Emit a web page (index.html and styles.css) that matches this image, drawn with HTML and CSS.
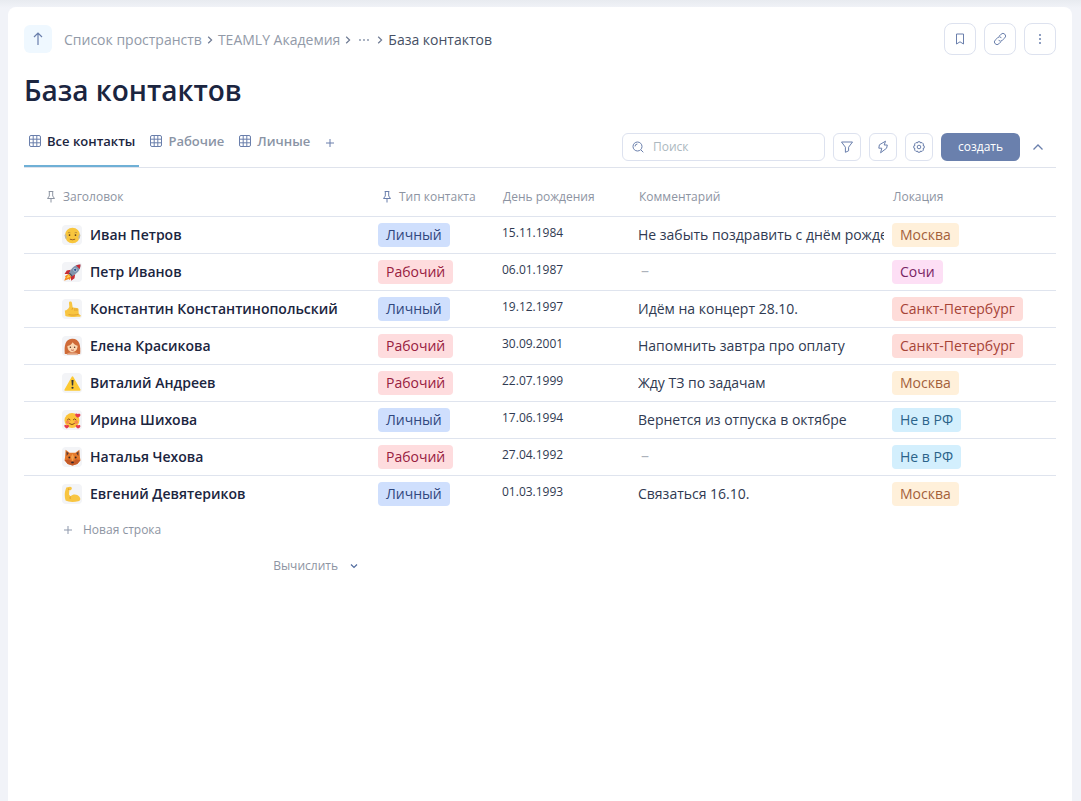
FILE: index.html
```html
<!DOCTYPE html>
<html lang="ru">
<head>
<meta charset="utf-8">
<meta name="viewport" content="width=device-width, initial-scale=1">
<title>База контактов</title>
<link rel="stylesheet" href="styles.css">
</head>
<body>
<svg class="sprite" aria-hidden="true">
  <symbol id="grid" viewBox="0 0 12 12"><rect x=".5" y=".5" width="11" height="11" rx="1.5"/><path d="M4.200.5v11M7.800.5v11M.5 4.200h11M.5 7.800h11"/></symbol>
  <symbol id="pin" viewBox="0 0 10 14"><path d="M2.700 1.500h4.600M3.300 1.500v4.500L1.500 8.500h7L6.700 6V1.500M5 8.500v4"/></symbol>
  <symbol id="right" viewBox="0 0 6 8"><path d="M1.200.8L4.600 4 1.200 7.200"/></symbol>
  <symbol id="plus" viewBox="0 0 10 10"><path d="M5 1v8M1 5h8"/></symbol>
</svg>
<main class="card">
  <header class="topbar">
    <button class="up" type="button" aria-label="Наверх"><svg width="12" height="14" viewBox="0 0 12 14"><path d="M6 13V1M2 5l4-4 4 4"/></svg></button>
    <nav class="crumbs" aria-label="Путь">
      <a href="#">Список пространств</a>
      <svg class="sep" width="6" height="8"><use href="#right"/></svg>
      <a href="#">TEAMLY Академия</a>
      <svg class="sep" width="6" height="8"><use href="#right"/></svg>
      <button class="more" type="button" aria-label="Ещё"><svg width="12" height="4" viewBox="0 0 12 4"><circle cx="2" cy="2" r=".9"/><circle cx="6" cy="2" r=".9"/><circle cx="10" cy="2" r=".9"/></svg></button>
      <svg class="sep" width="6" height="8"><use href="#right"/></svg>
      <a href="#" class="current" aria-current="page">База контактов</a>
    </nav>
    <div class="actions">
      <button class="square large" type="button" aria-label="В закладки"><svg width="12" height="14" viewBox="0 0 12 14"><path d="M2.500 2h7v10L6 9.800 2.500 12z"/></svg></button>
      <button class="square large" type="button" aria-label="Ссылка"><svg width="14" height="14" viewBox="0 0 14 14"><path d="M6 4.300l2.100-2.100a2.600 2.600 0 0 1 3.700 3.700L9.300 8.300a2.600 2.600 0 0 1-3.700 0M8 9.700l-2.100 2.100a2.600 2.600 0 0 1-3.700-3.700l2.500-2.400a2.600 2.600 0 0 1 3.700 0"/></svg></button>
      <button class="square large dots" type="button" aria-label="Меню"><svg width="4" height="12" viewBox="0 0 4 12"><circle cx="2" cy="2" r="1"/><circle cx="2" cy="6" r="1"/><circle cx="2" cy="10" r="1"/></svg></button>
    </div>
  </header>

  <h1>База контактов</h1>

  <div class="toolbar">
    <div class="tabs">
      <button class="tab active" type="button"><svg width="12" height="12"><use href="#grid"/></svg>Все контакты</button>
      <button class="tab" type="button"><svg width="12" height="12"><use href="#grid"/></svg>Рабочие</button>
      <button class="tab" type="button"><svg width="12" height="12"><use href="#grid"/></svg>Личные</button>
      <button class="tab add" type="button" aria-label="Добавить вид"><svg width="10" height="10"><use href="#plus"/></svg></button>
    </div>
    <div class="tools">
      <label class="search"><svg width="12" height="12" viewBox="0 0 12 12"><circle cx="5.500" cy="5.500" r="4.500"/><path d="M9 9l2.300 2.300M3 5.400a2.500 2.500 0 0 1 2.400-2.400"/></svg><input type="search" placeholder="Поиск" aria-label="Поиск"></label>
      <button class="square" type="button" aria-label="Фильтр"><svg width="14" height="14" viewBox="0 0 14 14"><path d="M1.500 2h11L8.600 7.200v3.600L5.400 12.300V7.200z"/></svg></button>
      <button class="square" type="button" aria-label="Автоматизации"><svg width="14" height="14" viewBox="0 0 14 14"><path d="M9.500 1.200L3.400 4.800l-.6 3.400h3L4.600 12.800l6-4.600.7-3.200H8.200z"/></svg></button>
      <button class="square" type="button" aria-label="Настройки"><svg width="14" height="14" viewBox="0 0 14 14"><circle cx="7" cy="7" r="1.800"/><path d="M5.900 1.800h2.200l.5 1.200 1.400-.5 1.500 1.500-.5 1.400 1.200.5v2.200l-1.200.5.5 1.400-1.500 1.500-1.400-.5-.5 1.200H5.900l-.5-1.200-1.400.5L2.500 10l.5-1.400-1.200-.5V5.900L3 5.400 2.500 4 4 2.500l1.400.5z"/></svg></button>
      <button class="create" type="button">создать</button>
      <button class="collapse" type="button" aria-label="Свернуть"><svg width="12" height="8" viewBox="0 0 12 8"><path d="M1.500 6.500L6 2l4.500 4.500"/></svg></button>
    </div>
  </div>

  <table class="contacts">
    <colgroup><col><col class="col-type"><col class="col-date"><col class="col-comment"><col class="col-place"></colgroup>
    <thead>
      <tr>
        <th scope="col" class="first"><span class="head muted"><svg width="10" height="14"><use href="#pin"/></svg>Заголовок</span></th>
        <th scope="col"><span class="head pinned"><svg width="10" height="14"><use href="#pin"/></svg>Тип контакта</span></th>
        <th scope="col">День рождения</th>
        <th scope="col">Комментарий</th>
        <th scope="col">Локация</th>
      </tr>
    </thead>
    <tbody>
      <tr>
        <td class="name"><div class="person"><span class="emoji"><svg viewBox="0 0 16 16"><circle cx="8" cy="8" r="7.200" fill="#f8c63d"/><path d="M1 6C.3 8 .8 10.500 2.300 11.500L2.500 9zM15 6c.7 2 .2 4.500-1.300 5.500L13.500 9z" fill="#b9b7b3"/><path d="M3.700 5.500q1.200-.8 2.300 0M10 5.500q1.100-.8 2.300 0" stroke="#a9813a" fill="none" stroke-width=".7"/><circle cx="5.200" cy="7.600" r=".8" fill="#5b3b1d"/><circle cx="10.800" cy="7.600" r=".8" fill="#5b3b1d"/><path d="M5.500 11.500q2.500 1 5 0" stroke="#8a5020" fill="none" stroke-width=".8"/></svg></span>Иван Петров</div></td>
        <td><span class="chip blue">Личный</span></td><td class="date">15.11.1984</td><td><div class="comment">Не забыть поздравить с днём рождения</div></td><td><span class="chip sand">Москва</span></td>
      </tr>
      <tr>
        <td class="name"><div class="person"><span class="emoji"><svg viewBox="0 0 16 16"><path d="M4.500 9.200L.8 11.500l.8.700-1.400 3.500 4.300-1.500.7.800L7.300 12z" fill="#f58b22"/><path d="M4 10l-2 3.700L6 12z" fill="#ffd34d"/><path d="M6.500 5.500L2.600 6.200.5 9.300l4 .2zM10.500 9.500l-.6 4-3.200 2.300-.2-4z" fill="#c52b35"/><path d="M15.500.5c-5 0-8.300 2.800-11 8.500l2.700 2.700C12.700 9 15.500 5.700 15.500.5z" fill="#8095ad"/><path d="M15.500.5c-1.600 0-3 .3-4.200.8l3.400 3.400c.5-1.200.8-2.600.8-4.200z" fill="#c52b35"/><path d="M4.500 9l2.700 2.700 1-.7-3-3z" fill="#4b5066"/><circle cx="10.500" cy="5.500" r="1.500" fill="#294f8f" stroke="#dce6ee" stroke-width=".6"/></svg></span>Петр Иванов</div></td>
        <td><span class="chip red">Рабочий</span></td><td class="date">06.01.1987</td><td class="empty">–</td><td><span class="chip pink">Сочи</span></td>
      </tr>
      <tr>
        <td class="name"><div class="person"><span class="emoji"><svg viewBox="0 0 16 16"><path d="M.8 9c1.800-.5 3.500-1.800 4.200-3.700L4.700 1.800C4.700 0 7.300 0 7.500 1.800l.7 4.400 4 .3c1.200.1 1.700 1 1.500 2l.1 3.500 1.700 1.300c.7.600.2 1.500-.7 1.500-4 .2-10.500.4-13.500-.8z" fill="#f8c541"/><path d="M8.200 6.300l-.7 1.900M10.300 6.800v2.500M12.200 7v2.300M4.300 12.800c3.500.8 6.700.5 9.500-.4" fill="none" stroke="#d8952a" stroke-width=".7"/></svg></span>Константин Константинопольский</div></td>
        <td><span class="chip blue">Личный</span></td><td class="date">19.12.1997</td><td><div class="comment">Идём на концерт 28.10.</div></td><td><span class="chip coral">Санкт-Петербург</span></td>
      </tr>
      <tr>
        <td class="name"><div class="person"><span class="emoji"><svg viewBox="0 0 16 16"><path d="M.8 15C0 8 .8 1 7.500.6 14.800.3 15.800 7 15.200 15z" fill="#cf6b38"/><path d="M2.500 15.700c.5-3 10.500-3 11 0z" fill="#e2a07a"/><path d="M3.200 7.500c2.500-.6 4-1.600 5-3.500 1 1.700 2.500 2.900 4.600 3.400 0 3.600-2 5.800-4.800 5.800S3.200 11 3.200 7.500z" fill="#fbd7b1"/><circle cx="6" cy="8.700" r=".7" fill="#57352a"/><circle cx="10" cy="8.700" r=".7" fill="#57352a"/><path d="M6.700 11.200q1.300.8 2.600 0" stroke="#b54738" fill="none" stroke-width=".8"/></svg></span>Елена Красикова</div></td>
        <td><span class="chip red">Рабочий</span></td><td class="date">30.09.2001</td><td><div class="comment">Напомнить завтра про оплату</div></td><td><span class="chip coral">Санкт-Петербург</span></td>
      </tr>
      <tr>
        <td class="name"><div class="person"><span class="emoji"><svg viewBox="0 0 16 16"><path d="M8 2l6.800 12H1.200z" fill="#fcc932" stroke="#fcc932" stroke-width="1.600" stroke-linejoin="round"/><path d="M7 4.800h2l-.4 5H7.400z" fill="#31343b"/><circle cx="8" cy="12" r="1" fill="#31343b"/></svg></span>Виталий Андреев</div></td>
        <td><span class="chip red">Рабочий</span></td><td class="date">22.07.1999</td><td><div class="comment">Жду ТЗ по задачам</div></td><td><span class="chip sand">Москва</span></td>
      </tr>
      <tr>
        <td class="name"><div class="person"><span class="emoji"><svg viewBox="0 0 16 16"><circle cx="7.500" cy="8" r="7" fill="#fcc33a"/><circle cx="3.500" cy="9.500" r="1.800" fill="#f58a4c"/><circle cx="11.500" cy="9.500" r="1.800" fill="#f58a4c"/><path d="M3 7.500q1.500-2 3 0M8.500 7.500q1.500-2 3 0M5 10.800q2.500 2 5 0" stroke="#804018" fill="none" stroke-width=".9"/><g fill="#e63c4d"><path d="M13 5.300c-4-2-2.300-5.200 0-3.400 2.800-1.300 3.700 2 0 3.400zM2.500 15.500C-1 13.800.3 10.800 2.500 12.500c2.500-1.300 3.400 1.600 0 3zM13.200 15.500c-3.400-1.700-2.100-4.300 0-2.900 2.500-1.100 3.400 1.700 0 2.900z"/></g></svg></span>Ирина Шихова</div></td>
        <td><span class="chip blue">Личный</span></td><td class="date">17.06.1994</td><td><div class="comment">Вернется из отпуска в октябре</div></td><td><span class="chip sky">Не в РФ</span></td>
      </tr>
      <tr>
        <td class="name"><div class="person"><span class="emoji"><svg viewBox="0 0 16 16"><path d="M1.500.8L5.300 3.500h5.400L14.500.8l.5 7 .5 2.700-3 3.500L8 15.500 3.500 14l-3-3.500L1 7.800z" fill="#e5792b"/><path d="M2.300 2.300L4.500 4 2.500 6.500zM13.700 2.300L11.500 4l2 2.500z" fill="#5b3b36"/><path d="M.5 10.500l4.200-.8L8 12l3.300-2.300 4.200.8-3 3.500L8 15.500 3.500 14z" fill="#c45a28"/><path d="M6.500 7.500L8 12l1.500-4.500L8 4.500z" fill="#f3a14d"/><circle cx="5" cy="8" r=".9" fill="#38251f"/><circle cx="11" cy="8" r=".9" fill="#38251f"/><ellipse cx="8" cy="12.600" rx="1.300" ry=".9" fill="#33262b"/></svg></span>Наталья Чехова</div></td>
        <td><span class="chip red">Рабочий</span></td><td class="date">27.04.1992</td><td class="empty">–</td><td><span class="chip sky">Не в РФ</span></td>
      </tr>
      <tr>
        <td class="name"><div class="person"><span class="emoji"><svg viewBox="0 0 16 16"><path d="M2.200 1.300L5.700.6c1.500 0 2 1.300 1.500 2.200l-.7 1.300-1.400-.3-.4 4.300 1.500 1.700c2-2.300 6-2.400 8.300.3 1.600 2 .8 3.900-1.200 4.300-3.600.8-9 .9-11.800-.7C.2 9.500.5 5.500 2.200 1.300z" fill="#f8c541"/><path d="M6.200 9.800c-.7 1-.6 1.700 0 2.500M4.700 3.800l-.6-1.500" stroke="#d8952a" fill="none" stroke-width=".8"/></svg></span>Евгений Девятериков</div></td>
        <td><span class="chip blue">Личный</span></td><td class="date">01.03.1993</td><td><div class="comment">Связаться 16.10.</div></td><td><span class="chip sand">Москва</span></td>
      </tr>
    </tbody>
    <tfoot>
      <tr><td colspan="5" class="new"><button class="text-button" type="button"><svg width="10" height="10"><use href="#plus"/></svg>Новая строка</button></td></tr>
      <tr><td class="calc"><button class="text-button" type="button">Вычислить<svg class="down" width="8" height="6" viewBox="0 0 8 6"><path d="M1 1.500l3 3 3-3"/></svg></button></td><td colspan="4"></td></tr>
    </tfoot>
  </table>
</main>
</body>
</html>
```
FILE: styles.css
```css
* { box-sizing: border-box; }

body {
  min-height: 100vh;
  margin: 0;
  padding: 7px 9px 0 8px;
  display: flex;
  background: linear-gradient(#e8ebf0, #f1f3f8 8px);
  color: #1b2540;
  font: 14px/20px "Open Sans", "Noto Sans", sans-serif;
}

button, input { font: inherit; color: inherit; }

button {
  padding: 0;
  border: 0;
  background: none;
  display: flex;
  align-items: center;
  justify-content: center;
  cursor: pointer;
}

svg {
  flex: none;
  fill: none;
  stroke: #6a7fac;
  stroke-width: 1;
}

.sprite { position: absolute; width: 0; height: 0; }

.card {
  flex: 1;
  min-width: 0;
  padding: 16px 16px 0;
  border-radius: 8px 8px 0 0;
  background: #fff;
}

.topbar { display: flex; align-items: center; }

.up {
  width: 28px;
  height: 28px;
  margin-right: 12px;
  border-radius: 6px;
  background: #eff8ff;
}

.up svg { stroke-width: 1.2; }

.crumbs {
  flex: 1;
  display: flex;
  align-items: center;
  gap: 5px;
  padding-top: 2px;
}

.crumbs a { color: #929aa8; text-decoration: none; }
.crumbs .current { color: #465064; }
.sep { stroke: #6f7b94; stroke-width: 1.2; }
.more { width: 16px; height: 16px; }
.more svg { fill: #8490a6; stroke: none; }

.actions, .tools { display: flex; gap: 8px; }

.square {
  width: 28px;
  height: 28px;
  border: 1px solid #dde2ef;
  border-radius: 6px;
}

.large { width: 32px; height: 32px; border-radius: 8px; }
.dots svg { fill: #6a7fac; stroke: none; }

h1 {
  margin: 15px 0 23px;
  color: #1b2540;
  font-size: 28px;
  font-weight: 600;
  line-height: 40px;
}

.toolbar {
  display: flex;
  justify-content: space-between;
  border-bottom: 1px solid #dfe3ec;
}

.tabs { display: flex; gap: 6px; }

.tab {
  height: 34px;
  padding: 0 4px 16px 5px;
  gap: 6px;
  border-bottom: 2px solid transparent;
  color: #8a94a5;
  font-size: 13px;
  font-weight: 600;
  line-height: 16px;
}

.tab.active { border-color: #6fb0d6; color: #1b2540; }
.add { padding-bottom: 12px; }

.tools { padding-right: 4px; }

.search {
  width: 203px;
  height: 28px;
  padding: 0 10px 0 9px;
  display: flex;
  align-items: center;
  gap: 9px;
  border: 1px solid #dde2ef;
  border-radius: 6px;
}

.search input {
  min-width: 0;
  flex: 1;
  padding: 0;
  border: 0;
  outline: 0;
  background: none;
  font-size: 12px;
}

.search input::placeholder { color: #acb8c0; opacity: 1; }

.create {
  width: 79px;
  height: 28px;
  border-radius: 6px;
  background: #6a80ad;
  color: #fff;
  font-size: 12px;
  font-weight: 500;
}

.collapse { width: 28px; height: 28px; margin-left: -4px; }
.collapse svg { stroke-width: 1.3; }

.contacts {
  width: 100%;
  table-layout: fixed;
  border-collapse: separate;
  border-spacing: 0;
}

.col-type { width: 124px; }
.col-date { width: 136px; }
.col-comment { width: 254px; }
.col-place { width: 172px; }

.contacts th {
  height: 49px;
  padding: 10px 8px 0 9px;
  border-bottom: 1px solid #dfe4ee;
  color: #8d94a2;
  font-size: 12px;
  font-weight: 400;
  text-align: left;
}

.contacts .first { padding-left: 22px; }
.head { display: flex; align-items: center; gap: 7px; }
.muted svg { stroke: #8d94a2; }
.pinned { padding-left: 3px; }

.contacts td {
  height: 37px;
  padding: 0 0 0 8px;
  border-bottom: 1px solid #dfe4ee;
  white-space: nowrap;
}

.contacts tbody tr:last-child td, .contacts tfoot td {
  height: 36px;
  border-bottom: 0;
}

.contacts .name { padding-left: 38px; font-weight: 600; }
.person { display: flex; align-items: center; gap: 8px; }

.emoji {
  width: 20px;
  height: 20px;
  display: flex;
  align-items: center;
  justify-content: center;
  border-radius: 4px;
  background: #f3f4f7;
}

.emoji svg { width: 17px; height: 17px; stroke: none; }

.comment { overflow: hidden; color: #303a52; }
.contacts .date { padding-bottom: 4px; color: #303a52; font-size: 12px; }
.contacts .empty { padding-left: 11px; padding-bottom: 4px; color: #adb2bb; font-size: 16px; }

.chip {
  display: inline-block;
  padding: 0 8px;
  border-radius: 4px;
  line-height: 24px;
  vertical-align: middle;
}

.blue { background: #cfdffd; color: #30477e; }
.red { background: #fedcde; color: #98203f; }
.sand { background: #fff0da; color: #a35f3a; }
.pink { background: #fddff5; color: #782463; }
.coral { background: #fedcd9; color: #a64337; }
.sky { background: #d3effd; color: #2b638a; }

.text-button { color: #8d94a2; font-size: 12px; gap: 10px; }
.text-button svg { stroke: #8d97ab; }
.text-button .down { stroke: #526c9e; stroke-width: 1.2; }
.contacts .new { padding-left: 39px; }
.contacts .calc { padding-right: 12px; }
.calc .text-button { margin-left: auto; gap: 12px; }
```
